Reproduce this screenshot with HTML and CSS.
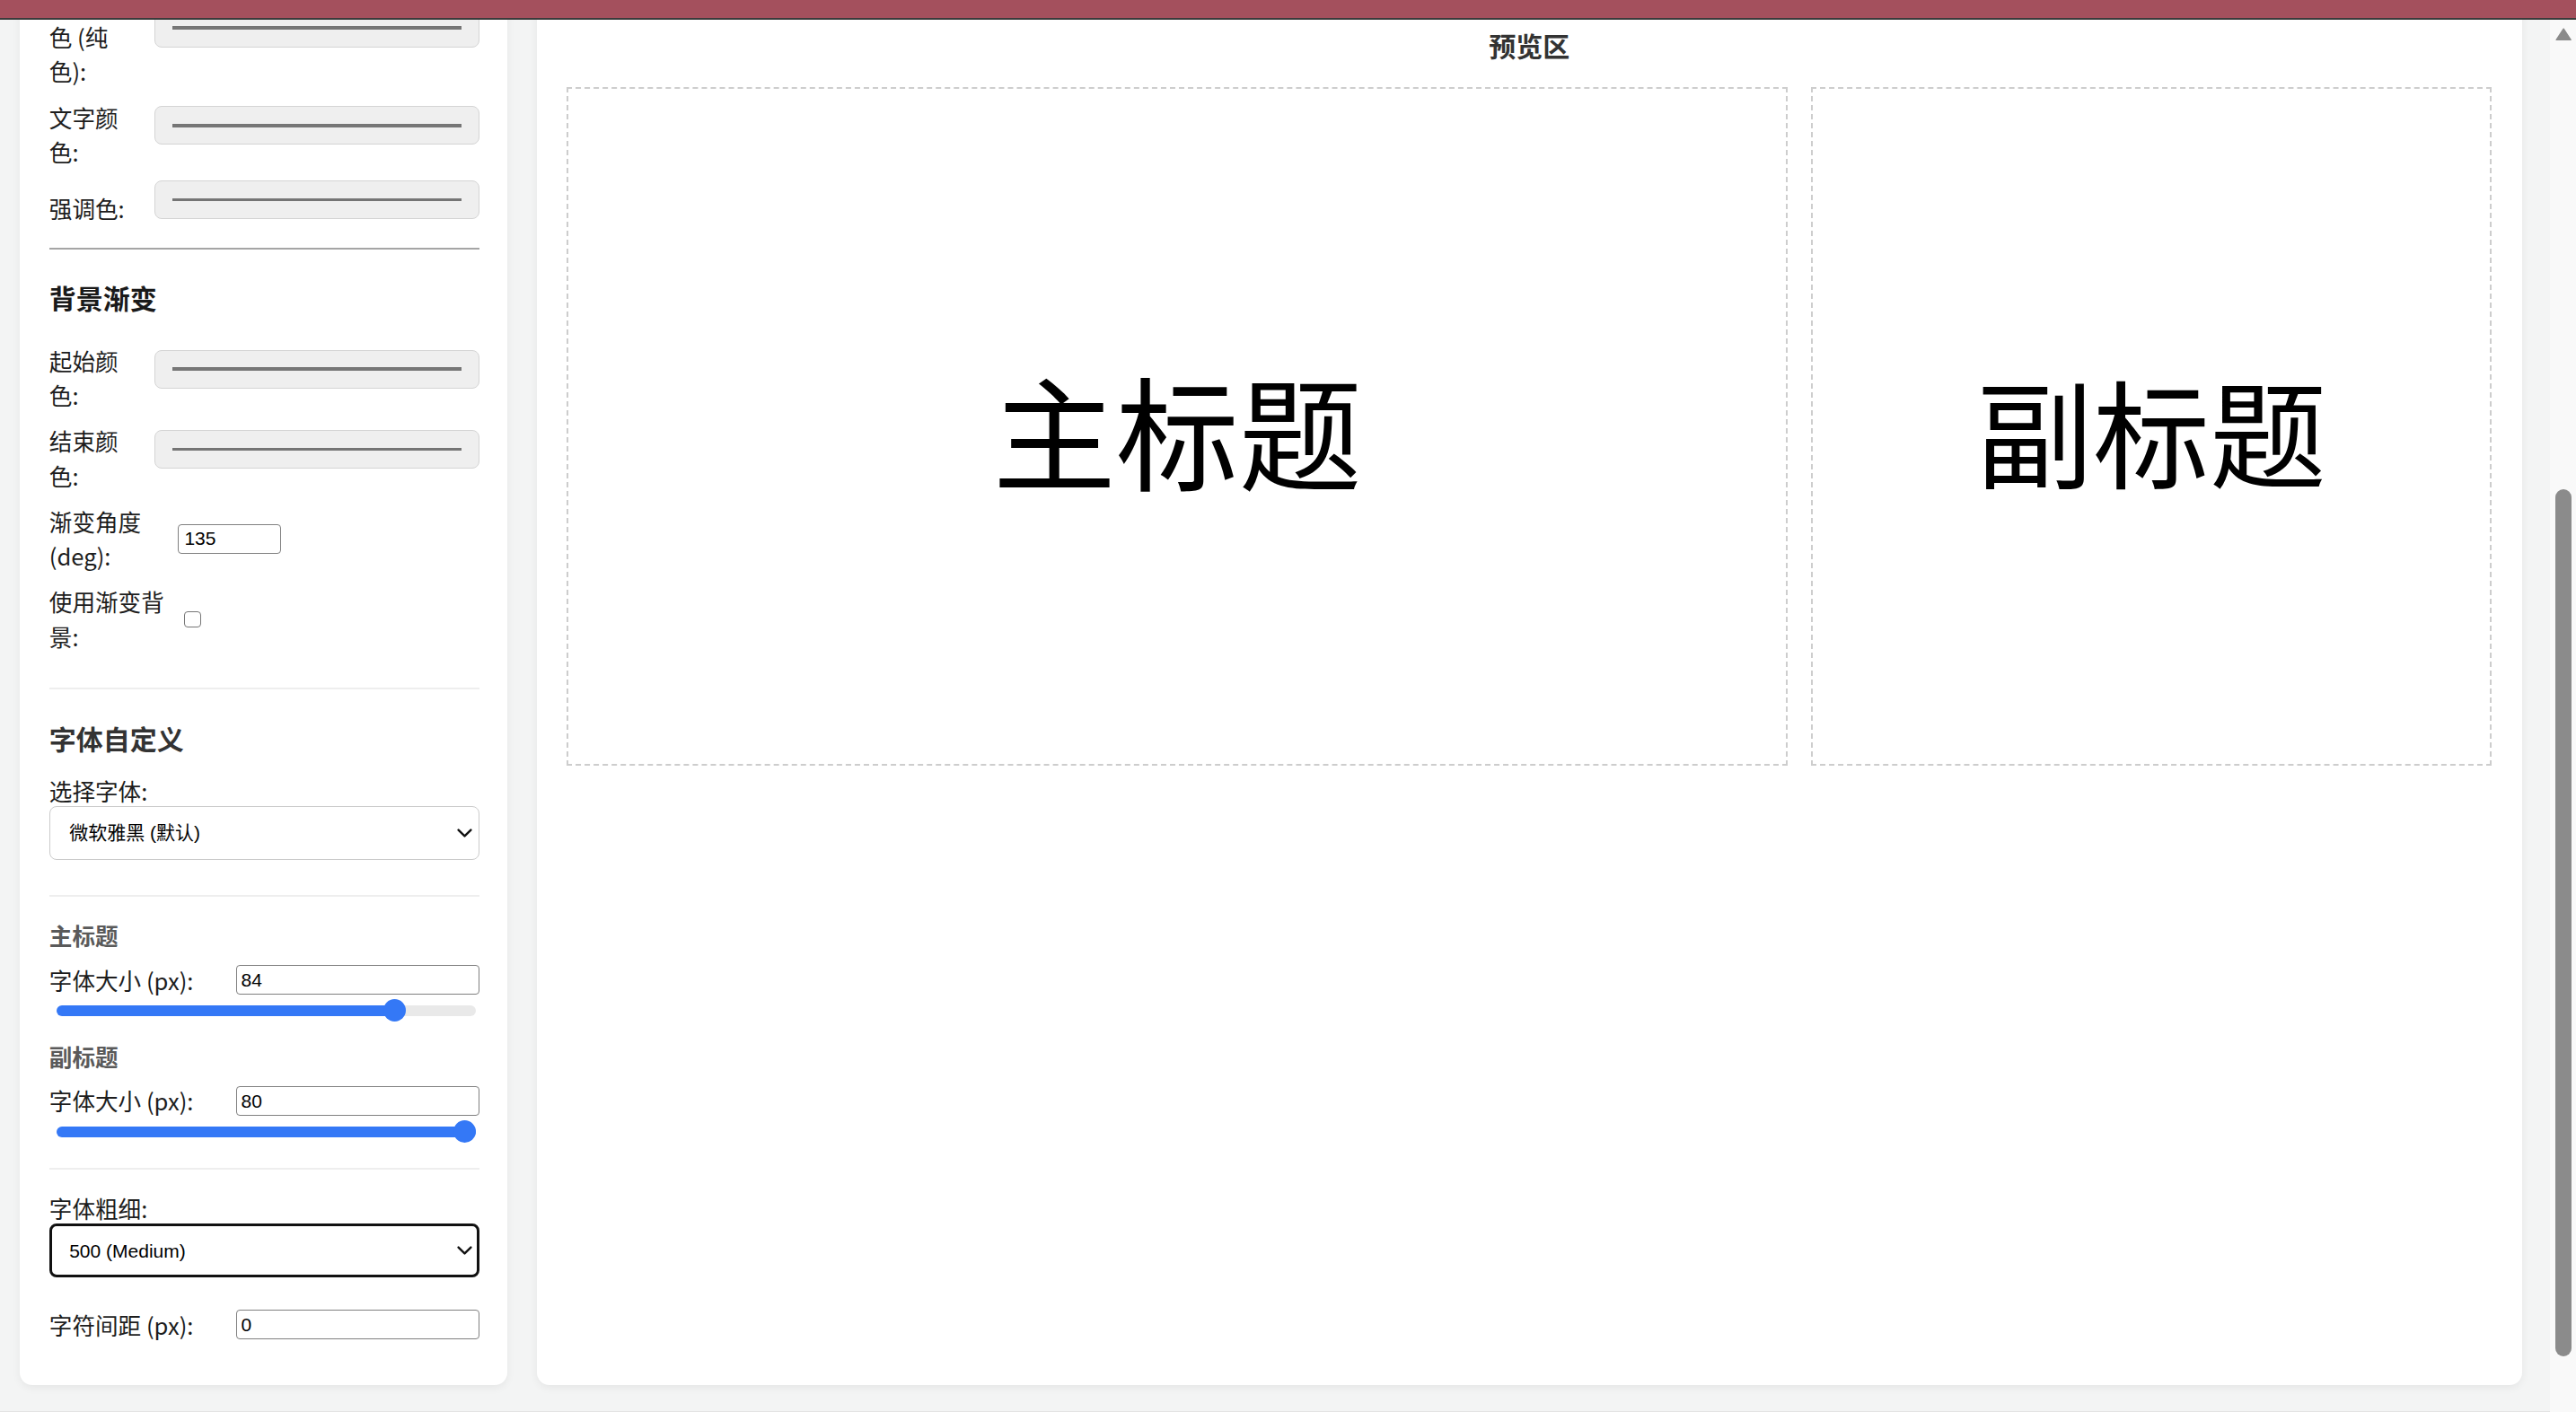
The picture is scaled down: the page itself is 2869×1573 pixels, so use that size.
FILE: index.html
```html
<!DOCTYPE html>
<html lang="zh-CN">
<head>
<meta charset="utf-8">
<title>封面生成器</title>
<link rel="stylesheet" href="styles.css">
</head>
<body>
<div class="topbar"></div>
<div class="viewport">
  <div class="page">
    <div class="layout">
      <aside class="panel controls">
        <div class="group">
          <div class="row">
            <label class="row-label" for="bg-color">背景颜色 (纯色):</label>
            <input class="color-input" type="color" id="bg-color" value="#777777">
          </div>
          <div class="row">
            <label class="row-label" for="text-color">文字颜色:</label>
            <input class="color-input" type="color" id="text-color" value="#777777">
          </div>
          <div class="row">
            <label class="row-label" for="accent-color">强调色:</label>
            <input class="color-input" type="color" id="accent-color" value="#777777">
          </div>
        </div>
        <hr class="rule">
        <h3 class="section-title">背景渐变</h3>
        <div class="group after-title">
          <div class="row">
            <label class="row-label" for="grad-start">起始颜色:</label>
            <input class="color-input" type="color" id="grad-start" value="#777777">
          </div>
          <div class="row">
            <label class="row-label" for="grad-end">结束颜色:</label>
            <input class="color-input" type="color" id="grad-end" value="#777777">
          </div>
          <div class="row">
            <label class="row-label label-angle" for="grad-angle">渐变角度 (deg):</label>
            <input class="text-input angle-input" type="number" id="grad-angle" value="135">
          </div>
          <div class="row">
            <label class="row-label label-check" for="use-grad">使用渐变背景:</label>
            <input class="checkbox" type="checkbox" id="use-grad">
          </div>
        </div>
        <div class="divider divider-section"></div>
        <h3 class="section-title muted">字体自定义</h3>
        <label class="field-label after-title-label" for="font-family">选择字体:</label>
        <div class="select-wrap">
          <select class="select" id="font-family">
            <option>微软雅黑 (默认)</option>
          </select>
          <svg class="chevron" viewBox="0 0 17 10" aria-hidden="true"><path d="M1.6 1.6 L8.5 8.4 L15.4 1.6"/></svg>
        </div>
        <div class="divider divider-select"></div>
        <div class="sub-heading">主标题</div>
        <div class="size-row">
          <label class="size-label" for="main-size">字体大小 (px):</label>
          <input class="text-input" type="text" id="main-size" value="84">
        </div>
        <input class="range" type="range" min="10" max="100" value="84" style="--fill: 80.5%">
        <div class="sub-heading second">副标题</div>
        <div class="size-row">
          <label class="size-label" for="sub-size">字体大小 (px):</label>
          <input class="text-input" type="text" id="sub-size" value="80">
        </div>
        <input class="range" type="range" min="10" max="80" value="80" style="--fill: 100%">
        <div class="divider divider-range"></div>
        <label class="field-label" for="font-weight">字体粗细:</label>
        <div class="select-wrap">
          <select class="select focused" id="font-weight">
            <option>500 (Medium)</option>
          </select>
          <svg class="chevron" viewBox="0 0 17 10" aria-hidden="true"><path d="M1.6 1.6 L8.5 8.4 L15.4 1.6"/></svg>
        </div>
        <div class="size-row spacing-row">
          <label class="size-label" for="letter-spacing">字符间距 (px):</label>
          <input class="text-input" type="text" id="letter-spacing" value="0">
        </div>
      </aside>
      <main class="panel preview">
        <h2 class="preview-title">预览区</h2>
        <div class="preview-row">
          <div class="preview-box"><span class="preview-main">主标题</span></div>
          <div class="preview-box"><span class="preview-sub">副标题</span></div>
        </div>
      </main>
    </div>
  </div>
  <div class="scrollbar">
    <svg class="scroll-arrow" viewBox="0 0 18.3 14.6" aria-hidden="true"><polygon points="9.15,1.2 17.1,13.4 1.2,13.4"/></svg>
    <div class="scroll-thumb"></div>
  </div>
</div>
</body>
</html>
```
FILE: styles.css
```css
* { box-sizing: border-box; }

html, body {
  margin: 0;
  height: 100%;
}

body {
  background: #f3f4f4;
  font-family: "Noto Sans CJK SC", "Noto Sans", sans-serif;
  color: #1d1d1d;
  overflow: hidden;
}

.topbar {
  position: fixed;
  top: 0;
  left: 0;
  right: 0;
  height: 22px;
  background: #a4505d;
  border-bottom: 2px solid #3b3b3b;
  z-index: 10;
}

.viewport {
  display: flex;
  height: 100vh;
}

.page {
  flex: 1;
  min-width: 0;
  overflow: hidden;
  border-bottom: 1.5px solid #e3e3e3;
}

.layout {
  display: flex;
  align-items: stretch;
  gap: 33px;
  padding: 0 31px 0 22px;
  margin-top: -49.5px;
}

.panel {
  background: #fff;
  border-radius: 14px;
  box-shadow: 0 3px 10px rgba(0, 0, 0, 0.06);
}

/* ---------- controls ---------- */

.controls {
  flex: none;
  width: 543px;
  padding: 33px 31.3px 47.6px 32.8px;
}

.group {
  display: flex;
  flex-direction: column;
  gap: 12.8px;
}

.group.after-title { margin-top: 31.8px; }

.row {
  display: flex;
  align-items: center;
  gap: 18px;
}

.row-label {
  flex: 1 1 0;
  min-width: 0;
  font-size: 25.6px;
  line-height: 38.4px;
}

.row-label.label-angle {
  flex: none;
  width: 125.1px;
}

.row-label.label-check {
  flex: none;
  width: 132.7px;
}

.color-input {
  -webkit-appearance: none;
  appearance: none;
  flex: none;
  width: 361.7px;
  height: 43px;
  margin: 0 0 20px 0;
  padding: 0;
  background: #efefef;
  border: 1.5px solid #d4d4d4;
  border-radius: 8px;
}

.color-input::-webkit-color-swatch-wrapper {
  padding: 18.8px 18.5px;
}

.color-input::-webkit-color-swatch {
  border: 1.2px solid #747474;
  border-radius: 0;
}

.text-input {
  flex: 1;
  min-width: 0;
  height: 33px;
  margin: 0;
  padding: 0 5px;
  border: 1.5px solid #808080;
  border-radius: 4px;
  background: #fff;
  color: #000;
  font-family: "Liberation Sans", Arial, sans-serif;
  font-size: 21px;
}

.angle-input {
  flex: none;
  width: 114.8px;
  height: 33.3px;
  padding-left: 6.5px;
  -moz-appearance: textfield;
}

.angle-input::-webkit-inner-spin-button,
.angle-input::-webkit-outer-spin-button {
  -webkit-appearance: none;
  margin: 0;
}

.checkbox {
  -webkit-appearance: none;
  appearance: none;
  flex: none;
  width: 18.4px;
  height: 17.6px;
  margin: 0;
  border: 1.5px solid #767676;
  border-radius: 4px;
  background: #fff;
}

.rule {
  height: 0;
  border: 0;
  border-top: 2px solid #a5a5a5;
  margin: 11.4px 0 34.3px;
}

.section-title {
  margin: 0;
  font-size: 30px;
  line-height: 39px;
  font-weight: 700;
  color: #1a1a1a;
}

.section-title.muted { color: #333; }

.divider {
  height: 0;
  border-top: 2px solid #eeeeee;
}

.divider-section { margin: 38.1px 0 34.5px; }
.divider-select  { margin: 39.7px 0 23.4px; }
.divider-range   { margin: 27.4px 0 26.2px; }

.field-label {
  display: block;
  font-size: 25.6px;
  line-height: 34px;
}

.field-label.after-title-label { margin-top: 22.3px; }

.select-wrap {
  position: relative;
}

.select {
  -webkit-appearance: none;
  appearance: none;
  display: block;
  width: 100%;
  height: 59.5px;
  margin: 0;
  padding: 0 44px 0 21.4px;
  border: 1.5px solid #cbcbcb;
  border-radius: 8px;
  background: #fff;
  color: #000;
  font-family: "Liberation Sans", "Noto Sans CJK SC", sans-serif;
  font-size: 21px;
}

.select.focused {
  height: 60.5px;
  border: 3.5px solid #111;
  padding-left: 19.4px;
}

.chevron {
  position: absolute;
  right: 8px;
  top: 50%;
  width: 17px;
  height: 10px;
  margin-top: -5px;
  pointer-events: none;
  fill: none;
  stroke: #111;
  stroke-width: 2.4;
  stroke-linecap: round;
  stroke-linejoin: round;
}

.sub-heading {
  font-size: 25.6px;
  line-height: 38.4px;
  font-weight: 700;
  color: #5a5a5a;
}

.sub-heading.second { margin-top: 19.2px; }

.size-row {
  display: flex;
  align-items: center;
  gap: 18px;
  margin-top: 11.4px;
}

.size-row.spacing-row { margin-top: 33.4px; }

.size-label {
  flex: none;
  width: 189.8px;
  font-size: 25.6px;
  line-height: 38.4px;
}

.range {
  -webkit-appearance: none;
  appearance: none;
  display: block;
  width: 467px;
  height: 25px;
  margin: 2.5px 0 0 8.3px;
  padding: 0;
  background: transparent;
}

.range::-webkit-slider-runnable-track {
  height: 11.7px;
  border-radius: 6px;
  background: linear-gradient(to right, #3478f6 0, #3478f6 var(--fill), #e9e9e9 var(--fill), #e9e9e9 100%);
}

.range::-webkit-slider-thumb {
  -webkit-appearance: none;
  appearance: none;
  width: 25px;
  height: 25px;
  margin-top: -6.65px;
  border: none;
  border-radius: 50%;
  background: #3478f6;
}

/* ---------- preview ---------- */

.preview {
  flex: 1;
  min-width: 0;
  padding: 80px 34px 0 33.4px;
}

.preview-title {
  margin: 0;
  text-align: center;
  font-size: 30px;
  line-height: 39px;
  font-weight: 700;
  color: #333;
}

.preview-row {
  display: grid;
  grid-template-columns: 1359.6fr 758.2fr;
  gap: 25.8px;
  margin-top: 27.2px;
}

.preview-box {
  height: 756px;
  border: 2px dashed #cdcdcd;
  display: flex;
  align-items: center;
  justify-content: center;
  padding-top: 4px;
  overflow: hidden;
}

.preview-main,
.preview-sub {
  font-weight: 400;
  color: #000;
  white-space: nowrap;
}

.preview-main { font-size: 137px; }
.preview-sub  { font-size: 130px; }

/* ---------- scrollbar ---------- */

.scrollbar {
  flex: none;
  width: 29px;
  background: #f9f9f9;
  padding: 30.6px 5px 0 5.7px;
}

.scroll-arrow {
  display: block;
  width: 18.3px;
  height: 14.6px;
  fill: #8a8a8a;
  stroke: #8a8a8a;
  stroke-width: 1.5;
  stroke-linejoin: round;
}

.scroll-thumb {
  width: 18.3px;
  height: 965.7px;
  margin-top: 499.8px;
  background: #8b8b8b;
  border-radius: 9px;
}
```
